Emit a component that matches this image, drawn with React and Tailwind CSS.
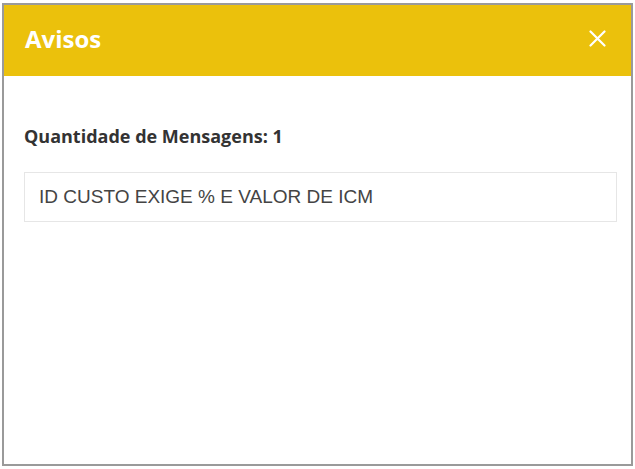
export default function App() {
  return (
    <div className="h-[469px] w-[635px] bg-white pl-[2px] pt-[3px]">
      <div className="flex h-[463px] w-[631px] flex-col border-2 border-[#9a9a9a] bg-white">
        <div className="flex h-[71px] items-center justify-between bg-[#ebc10c] pb-[4px] pl-[21px] pr-[22px]">
          <h2 className="font-['Open_Sans',sans-serif] text-[24px] font-bold text-white">
            Avisos
          </h2>
          <button className="flex h-6 w-6 items-center justify-center text-white">
            <svg width="17" height="17" viewBox="0 0 17 17" fill="none">
              <path
                d="M1.5 1.5L15.5 15.5M15.5 1.5L1.5 15.5"
                stroke="currentColor"
                strokeWidth="2.2"
                strokeLinecap="round"
              />
            </svg>
          </button>
        </div>
        <div className="pl-[20px] pt-[47px]">
          <p className="font-['Open_Sans',sans-serif] text-[18px] font-bold text-[#333]">
            Quantidade de Mensagens: 1
          </p>
          <div className="mt-[22px] flex h-[50px] w-[593px] items-center border border-[#e6e6e6] px-[14px]">
            <span className="font-['Liberation_Sans',Arial,sans-serif] text-[19px] text-[#444]">
              ID CUSTO EXIGE % E VALOR DE ICM
            </span>
          </div>
        </div>
      </div>
    </div>
  );
}
